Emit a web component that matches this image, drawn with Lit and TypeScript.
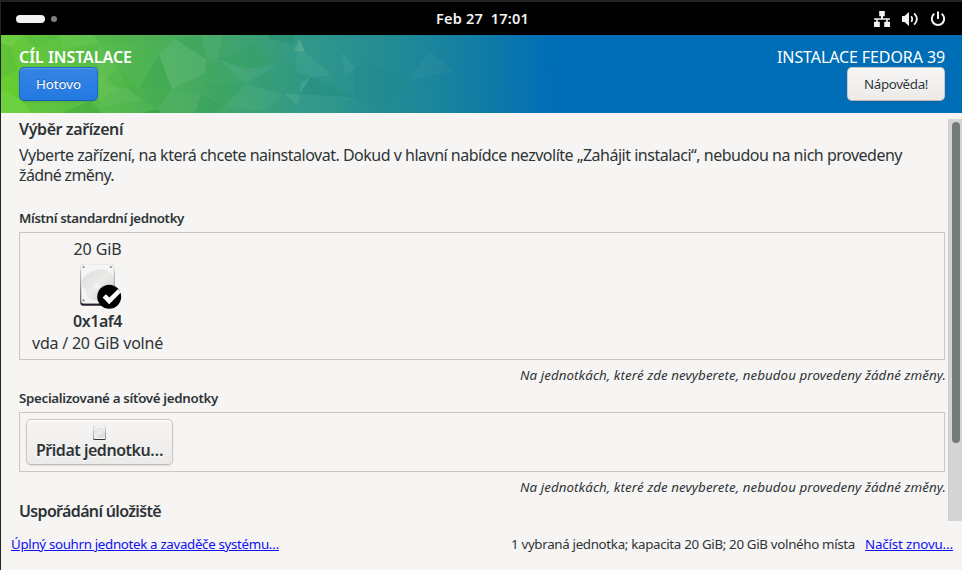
import { LitElement, html, svg, css } from "lit";
import { customElement, property } from "lit/decorators.js";

/** A single line of text that is tracked so that it fills a given width. */
@customElement("fit-line")
class FitLine extends LitElement {
  @property({ type: Number }) width = 0;
  static styles = css`
    :host { display: inline-block; white-space: pre; vertical-align: top; }
  `;
  render() {
    return html`<slot></slot>`;
  }
  firstUpdated() {
    const count = (this.textContent ?? "").length;
    const natural = this.getBoundingClientRect().width;
    this.style.letterSpacing = (this.width - natural) / count + "px";
  }
}

type Facet = [points: string, fill: string, opacity: number];

const FACETS: Facet[] = [
  ["0,0 22,0 10,12 0,8", "#8bd860", 0.25],
  ["22,0 60,0 36,14", "#2f9a40", 0.12],
  ["60,0 92,0 100,8 62,14", "#8be070", 0.14],
  ["0,8 10,12 16,34 0,44", "#35a02e", 0.16],
  ["0,78 0,55 22,66 30,78", "#8be85a", 0.22],
  ["0,44 16,34 22,66 0,55", "#62d820", 0.25],
  ["98,8 116,34 98,50", "#8fd67a", 0.16],
  ["92,0 158,0 158,8 100,8", "#48a858", 0.16],
  ["158,20 174,4 205,24 204,38 171,54", "#80c8a0", 0.2],
  ["158,20 171,54 138,54", "#128a30", 0.15],
  ["158,20 138,54 120,36", "#50b860", 0.15],
  ["174,4 200,0 205,24", "#309a58", 0.15],
  ["200,0 222,0 217,24 205,24", "#70bf90", 0.18],
  ["120,36 138,54 126,54", "#30b820", 0.2],
  ["98,50 127,54 141,65 100,72", "#78c878", 0.2],
  ["127,54 171,54 157,75 141,65", "#2d9a48", 0.15],
  ["98,40 118,53 90,70 82,50", "#90e060", 0.12],
  ["60,78 90,66 100,78", "#1c8b28", 0.22],
  ["141,78 157,74 160,78", "#0c8020", 0.25],
  ["171,54 200,59 194,78 157,75", "#68b880", 0.16],
  ["200,59 222,71 215,78 194,78", "#269a50", 0.22],
  ["217,24 204,38 202,48 245,49", "#36b060", 0.16],
  ["217,24 244,34 245,49", "#68c090", 0.2],
  ["200,48 245,49 222,74", "#28a850", 0.18],
  ["222,72 245,49 283,60 262,76", "#60bd90", 0.18],
  ["217,24 244,34 276,30 268,0 222,0", "#48a878", 0.14],
  ["217,24 253,10 276,30 245,34", "#28a050", 0.22],
  ["244,34 276,30 245,49", "#70c0a0", 0.14],
  ["294,26 300,5 303,16", "#80c8a0", 0.16],
  ["293,16 298,4 304,16", "#80c8a0", 0.3],
  ["294,26 303,16 330,40 310,42 295,37", "#60b8a0", 0.2],
  ["310,42 352,62 299,59", "#148068", 0.2],
  ["299,59 352,62 340,78 294,78", "#48a898", 0.12],
  ["300,48 309,42 299,59", "#80c8a8", 0.2],
  ["283,58 299,60 296,71", "#70bfa0", 0.24],
  ["276,30 294,26 310,42 283,60 245,49", "#259a60", 0.14],
  ["341,16 354,33 344,40", "#60b8b0", 0.18],
  ["268,0 292,0 293,9 268,4", "#127850", 0.18],
  ["408,45 428,16 453,36", "#60b0b0", 0.11],
  ["354,33 364,26 408,45 385,78 352,62", "#108078", 0.08],
];

@customElement("facet-banner")
class FacetBanner extends LitElement {
  static styles = css`
    :host { display: block; }
    .art { display: block; width: 961px; height: 78px; }
  `;
  render() {
    return html`<svg class="art" viewBox="0 0 961 78">
      <defs>
        <linearGradient id="base" gradientUnits="userSpaceOnUse" x1="0" y1="12" x2="550" y2="0">
          <stop offset="0" stop-color="#67cb37"></stop>
          <stop offset=".2" stop-color="#54ba4b"></stop>
          <stop offset=".38" stop-color="#43a764"></stop>
          <stop offset=".55" stop-color="#319889"></stop>
          <stop offset=".73" stop-color="#218a97"></stop>
          <stop offset=".88" stop-color="#107ba6"></stop>
          <stop offset="1" stop-color="#006eb7"></stop>
        </linearGradient>
      </defs>
      <rect width="961" height="78" fill="url(#base)"></rect>
      ${FACETS.map(([p, f, o]) => svg`<polygon points=${p} fill=${f} opacity=${o}></polygon>`)}
    </svg>`;
  }
}

@customElement("drive-icon")
class DriveIcon extends LitElement {
  static styles = css`
    :host { display: block; }
    .small { display: block; width: 13px; height: 15px; }
    .large { display: block; width: 44px; height: 48px; }
  `;
  @property({ type: Boolean }) small = false;
  render() {
    const body = svg`
      <defs>
        <linearGradient id="plate" x1="0" y1="0" x2="1" y2="1">
          <stop offset="0" stop-color="#dcdcda"></stop>
          <stop offset=".5" stop-color="#ebebe9"></stop>
          <stop offset="1" stop-color="#d0d0cc"></stop>
        </linearGradient>
        <linearGradient id="rim" x1="0" y1="0" x2="0" y2="1">
          <stop offset=".3" stop-color="#deddda"></stop>
          <stop offset="1" stop-color="#5e5c64"></stop>
        </linearGradient>
      </defs>
      <rect x=".3" y="6" width="34" height="36.8" rx="3" fill="#241f31"></rect>
      <rect x=".3" y="1" width="34" height="39.6" rx="2.5" fill="url(#rim)"></rect>
      <rect x="1.3" y="1.6" width="32" height="38.8" rx="2" fill="#f5f5f4"></rect>
      <path d="M2 19 Q3 12 13 8 Q28 2 33 14 V32 L24 37 Q12 40 7 33 L5 27 L2 23Z" fill="url(#plate)"></path>
      <circle cx="17" cy="23" r="2.4" fill="#f6f5f4"></circle>
      <g fill="#88878b"><circle cx="3.6" cy="4" r="1.1"></circle><circle cx="30.8" cy="4" r="1.1"></circle><circle cx="3.6" cy="37.4" r="1.1"></circle></g>`;
    return this.small
      ? html`<svg class="small" viewBox="-.5 0 36 43" preserveAspectRatio="none">${body}</svg>`
      : html`<svg class="large" viewBox="0 0 44 48">${body}
          <circle cx="29.2" cy="33.8" r="12" fill="#000"></circle>
          <path d="M22.6 34.6 L25.9 31.2 L29.4 34.6 L38.1 26 L41.1 29.3 L29.2 41.2 Z" fill="#fff"></path>
        </svg>`;
  }
}

@customElement("app-root")
class AppRoot extends LitElement {
  static styles = css`
    :host {
      display: flex; flex-direction: column; box-sizing: border-box;
      width: 962px; height: 570px; overflow: hidden;
      border-top: 2px solid #242424; border-left: 1px solid #242424;
      background: #f6f5f4; color: #2e3436;
      font: 16px/20px "Noto Sans", "Open Sans", sans-serif;
    }
    .panel { flex: none; height: 33px; background: #000; color: #f2f2f2; display: grid; grid-template-columns: 1fr auto 1fr; align-items: center; }
    .spaces { display: flex; gap: 6px; align-items: center; padding-left: 15px; }
    .current { width: 29px; height: 8px; border-radius: 4px; background: #f2f2f2; }
    .other { width: 6px; height: 6px; border-radius: 3px; background: #808080; }
    .clock { font-size: 14.5px; font-weight: 600; margin: 0 0 2px 2px; }
    .status { display: flex; justify-content: flex-end; gap: 12px; padding-right: 16px; }
    .status svg { width: 16px; height: 16px; display: block; }
    .banner { flex: none; display: grid; height: 78px; color: #fff; }
    .banner > * { grid-area: 1 / 1; }
    .bar { z-index: 1; display: flex; justify-content: space-between; padding: 12px 17px 0 18px; }
    .side { display: flex; flex-direction: column; align-items: flex-start; }
    .side.end { align-items: flex-end; }
    .name { font-weight: 600; }
    .btn { box-sizing: border-box; height: 34px; border-radius: 5px; border: 1px solid #cdc7c2; border-bottom-color: #bfb8b1; padding: 0 16px; font-size: 13.33px; line-height: 32px;
      color: #2e3436; background: linear-gradient(#f6f5f4, #edebe9); box-shadow: 0 1px 2px rgba(0,0,0,.1), inset 0 1px #fff; text-shadow: 0 1px #fff; }
    .btn.primary { border-color: #1b6acb; border-bottom-color: #185fb4; color: #fff; background: linear-gradient(#3584e4, #2379e2); box-shadow: 0 1px 2px rgba(0,0,0,.12), inset 0 1px rgba(255,255,255,.2); text-shadow: 0 -1px rgba(0,0,0,.35); }
    .body { flex: none; height: 402px; margin-top: 6px; display: flex; justify-content: space-between; overflow: hidden; }
    .content { width: 926px; margin-left: 18px; display: flex; flex-direction: column; }
    .title { font-weight: 600; }
    .intro { margin-top: 6px; height: 40px; }
    .label { font-size: 13.33px; font-weight: 600; }
    .first { margin-top: 23px; }
    .frame { box-sizing: border-box; border: 1px solid #c9c7c3; display: flex; }
    .disks { height: 128px; margin-top: 4px; padding: 6px 12px; }
    .disk { display: flex; flex-direction: column; align-items: center; height: 114px; }
    .disk drive-icon { height: 48px; margin: 4px 0 0 8px; }
    .disk .id { font-weight: 600; margin-bottom: 2px; }
    .note { align-self: flex-end; font-size: 13.33px; font-style: italic; margin: 5px -1px 0 0; height: 20px; }
    .second { margin-top: 3px; }
    .network { height: 60px; margin-top: 4px; padding: 6px; }
    .add { display: flex; flex-direction: column; align-items: center; height: 46px; padding: 5px 10px 0; width: 147px; line-height: 20px; font-size: 16px; font-weight: 600; }
    .add drive-icon { height: 15px; }
    .third { margin-top: 4px; }
    .track { width: 14px; box-sizing: border-box; background: #d5d5d5; border-left: 1px solid #cdcac7; padding: 3px 1px 0 3px; }
    .thumb { width: 8px; height: 321px; border-radius: 4px; background: #747979; }
    .foot { display: flex; font-size: 13.33px; padding: 13px 9px 0 10px; height: 20px; }
    .summary { margin-left: auto; margin-right: 10px; }
    .link { color: #0f0ff5; text-decoration: underline; }
  `;

  render() {
    return html`
      <div class="panel">
        <div class="spaces"><span class="current"></span><span class="other"></span></div>
        <fit-line class="clock" width="93">Feb 27  17:01</fit-line>
        <div class="status">
          <svg viewBox="0 0 16 16" fill="#f2f2f2"><path d="M5.2 0h5.6v5.2H9v2h7v1.6h-2.2v2H16V16h-5.8v-5.2h2v-2H3.8v2h2V16H0v-5.2h2.2v-2H0V7.2h7v-2H5.2z"></path></svg>
          <svg viewBox="0 0 16 16" fill="none" stroke="#f2f2f2" stroke-width="1.8"><path d="M0 5h2.5L7 1v14l-4.5-4H0z" fill="#f2f2f2" stroke="none"></path><path d="M9.2 5.2Q11.2 8 9.2 10.8M12.2 2.3Q17.6 8 12.2 13.7"></path></svg>
          <svg viewBox="0 0 16 16" fill="none" stroke="#f2f2f2" stroke-width="2"><path d="M4.4 2.8A6.2 6.2 0 1 0 11.6 2.8M8 .5V8"></path></svg>
        </div>
      </div>
      <div class="banner">
        <facet-banner></facet-banner>
        <div class="bar">
          <div class="side">
            <fit-line class="name" width="113">CÍL INSTALACE</fit-line>
            <div class="btn primary"><fit-line width="45">Hotovo</fit-line></div>
          </div>
          <div class="side end">
            <fit-line width="168">INSTALACE FEDORA 39</fit-line>
            <div class="btn"><fit-line width="64">Nápověda!</fit-line></div>
          </div>
        </div>
      </div>
      <div class="body">
        <div class="content">
          <div><fit-line class="title" width="104">Výběr zařízení</fit-line></div>
          <div class="intro">
            <fit-line width="883">Vyberte zařízení, na která chcete nainstalovat. Dokud v hlavní nabídce nezvolíte „Zahájit instalaci“, nebudou na nich provedeny</fit-line>
            <fit-line width="95">žádné změny.</fit-line>
          </div>
          <div class="first"><fit-line class="label" width="165">Místní standardní jednotky</fit-line></div>
          <div class="frame disks">
            <div class="disk">
              <fit-line width="48">20 GiB</fit-line>
              <drive-icon></drive-icon>
              <fit-line class="id" width="49">0x1af4</fit-line>
              <fit-line width="131">vda / 20 GiB volné</fit-line>
            </div>
          </div>
          <fit-line class="note" width="426">Na jednotkách, které zde nevyberete, nebudou provedeny žádné změny.</fit-line>
          <div class="second"><fit-line class="label" width="199">Specializované a síťové jednotky</fit-line></div>
          <div class="frame network">
            <div class="btn add"><drive-icon small></drive-icon><fit-line width="127">Přidat jednotku…</fit-line></div>
          </div>
          <fit-line class="note" width="426">Na jednotkách, které zde nevyberete, nebudou provedeny žádné změny.</fit-line>
          <div class="third"><fit-line class="title" width="142">Uspořádání úložiště</fit-line></div>
        </div>
        <div class="track"><div class="thumb"></div></div>
      </div>
      <div class="foot">
        <fit-line class="link" width="268">Úplný souhrn jednotek a zavaděče systému…</fit-line>
        <fit-line class="summary" width="344">1 vybraná jednotka; kapacita 20 GiB; 20 GiB volného místa</fit-line>
        <fit-line class="link" width="88">Načíst znovu…</fit-line>
      </div>
    `;
  }
}
